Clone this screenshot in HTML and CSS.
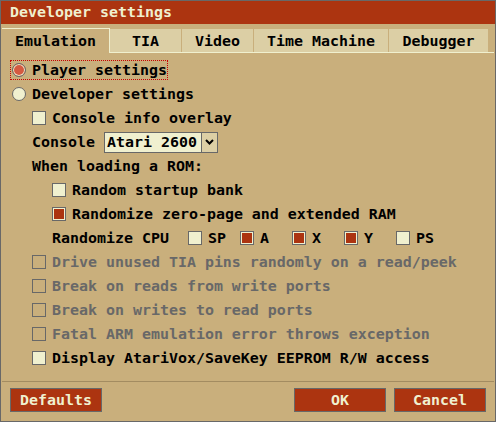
FILE: index.html
```html
<!DOCTYPE html>
<html>
<head>
<meta charset="utf-8">
<link rel="stylesheet" href="styles.css">
</head>
<body>
<div class="dialog">
  <div class="titlebar">Developer settings</div>
  <div class="tabs">
    <div class="tab active">Emulation</div>
    <div class="tab-rest">
      <div class="tab w-tia">TIA</div>
      <div class="tab w-video">Video</div>
      <div class="tab w-tm">Time Machine</div>
      <div class="tab w-dbg">Debugger</div>
    </div>
  </div>
  <div class="content">
    <div class="row"><span class="radio-label focus"><span class="radio on"></span><span class="lbl">Player settings</span></span></div>
    <div class="row"><span class="radio-label"><span class="radio"></span><span class="lbl">Developer settings</span></span></div>
    <div class="row ind1"><span class="box"></span><span class="lbl">Console info overlay</span></div>
    <div class="row ind1"><span class="plain">Console</span>
      <span class="select"><span class="sel-text">Atari 2600</span><span class="sel-arrow"><svg width="9" height="6" viewBox="0 0 9 6"><polyline points="1,1 4.5,4.5 8,1" fill="none" stroke="#000" stroke-width="2"/></svg></span></span>
    </div>
    <div class="row ind1"><span class="plain">When loading a ROM:</span></div>
    <div class="row ind2"><span class="box"></span><span class="lbl">Random startup bank</span></div>
    <div class="row ind2"><span class="box on"></span><span class="lbl">Randomize zero-page and extended RAM</span></div>
    <div class="row ind2"><span class="plain">Randomize CPU</span>
      <span class="cpu">
        <span class="cpu-item"><span class="box"></span><span class="lbl">SP</span></span>
        <span class="cpu-item"><span class="box on"></span><span class="lbl">A</span></span>
        <span class="cpu-item"><span class="box on"></span><span class="lbl">X</span></span>
        <span class="cpu-item"><span class="box on"></span><span class="lbl">Y</span></span>
        <span class="cpu-item"><span class="box"></span><span class="lbl">PS</span></span>
      </span>
    </div>
    <div class="row ind1 disabled"><span class="box"></span><span class="lbl">Drive unused TIA pins randomly on a read/peek</span></div>
    <div class="row ind1 disabled"><span class="box"></span><span class="lbl">Break on reads from write ports</span></div>
    <div class="row ind1 disabled"><span class="box"></span><span class="lbl">Break on writes to read ports</span></div>
    <div class="row ind1 disabled"><span class="box"></span><span class="lbl">Fatal ARM emulation error throws exception</span></div>
    <div class="row ind1"><span class="box"></span><span class="lbl">Display AtariVox/SaveKey EEPROM R/W access</span></div>
  </div>
  <div class="separator"></div>
  <div class="footer">
    <button class="btn">Defaults</button>
    <div class="spacer"></div>
    <button class="btn">OK</button>
    <button class="btn">Cancel</button>
  </div>
</div>
</body>
</html>
```
FILE: styles.css
```css
html, body {
  margin: 0;
  padding: 0;
  background: #c9af7c;
}
body {
  font-family: "DejaVu Sans Mono", "Liberation Mono", monospace;
  font-size: 14.95px;
  font-weight: bold;
  color: #000;
}
.dialog {
  width: 496px;
  height: 422px;
  box-sizing: border-box;
  border: 1px solid #686868;
  background: #c9af7c;
  display: flex;
  flex-direction: column;
}
.titlebar {
  height: 23px;
  line-height: 23px;
  background: #ac3410;
  color: #f0f0cf;
  padding-left: 9px;
  white-space: pre;
}
.tabs {
  display: flex;
  margin: 4px 1px 0 1px;
  height: 25px;
}
.tab {
  display: flex;
  align-items: center;
  justify-content: center;
  white-space: pre;
}
.tab.active {
  width: 107px;
  border-top: 1px solid #f0f0cf;
  border-right: 1px solid #f0f0cf;
}
.tab-rest {
  flex: 1;
  display: flex;
  gap: 1px;
  padding-top: 1px;
  border-bottom: 1px solid #f0f0cf;
}
.tab-rest .tab {
  background: #dccfa5;
}
.w-tia { width: 71px; }
.w-video { width: 71px; }
.w-tm { width: 134px; }
.w-dbg { width: 99px; }

.content {
  display: flex;
  flex-direction: column;
  padding: 5px 0 0 9px;
}
.row {
  height: 24px;
  display: flex;
  align-items: center;
  white-space: pre;
}
.ind1 { padding-left: 22px; }
.ind2 { padding-left: 42px; }
.radio-label {
  display: flex;
  align-items: center;
  height: 18px;
  padding-left: 1px;
  border: 1px dotted transparent;
}
.radio-label.focus {
  border-color: #c80000;
}
.radio {
  width: 14px;
  height: 14px;
  box-sizing: border-box;
  border: 1px solid #686868;
  border-radius: 50%;
  background: #f0f0cf;
}
.radio.on {
  background: #d55941;
  box-shadow: inset 0 0 0 1px #f0f0cf;
}
.lbl {
  margin-left: 6px;
}
.box {
  width: 14px;
  height: 14px;
  box-sizing: border-box;
  border: 1px solid #686868;
  background: #f0f0cf;
  flex: none;
}
.box.on {
  background: #ac3410;
  box-shadow: inset 0 0 0 1px #f0f0cf;
}
.disabled {
  color: #686868;
}
.disabled .box {
  background: transparent;
}
.select {
  margin-left: 9px;
  width: 114px;
  height: 21px;
  box-sizing: border-box;
  border: 1px solid #686868;
  background: #f0f0cf;
  display: flex;
  align-items: stretch;
}
.sel-text {
  flex: 1;
  padding-left: 2px;
  display: flex;
  align-items: center;
}
.sel-arrow {
  width: 15px;
  background: #dccfa5;
  border-left: 1px solid #686868;
  display: flex;
  align-items: center;
  justify-content: center;
}
.cpu {
  display: flex;
  margin-left: 19px;
}
.cpu-item {
  width: 52px;
  display: flex;
  align-items: center;
}
.separator {
  height: 1px;
  background: #a38c61;
  margin: 11px 1px 0 1px;
}
.footer {
  display: flex;
  margin: 6px 9px 0 9px;
  gap: 8px;
}
.spacer {
  flex: 1;
}
.btn {
  width: 92px;
  height: 24px;
  box-sizing: border-box;
  border: 1px solid #686868;
  background: #ac3410;
  color: #f0f0cf;
  font: inherit;
  padding: 0;
  margin: 0;
}
```
